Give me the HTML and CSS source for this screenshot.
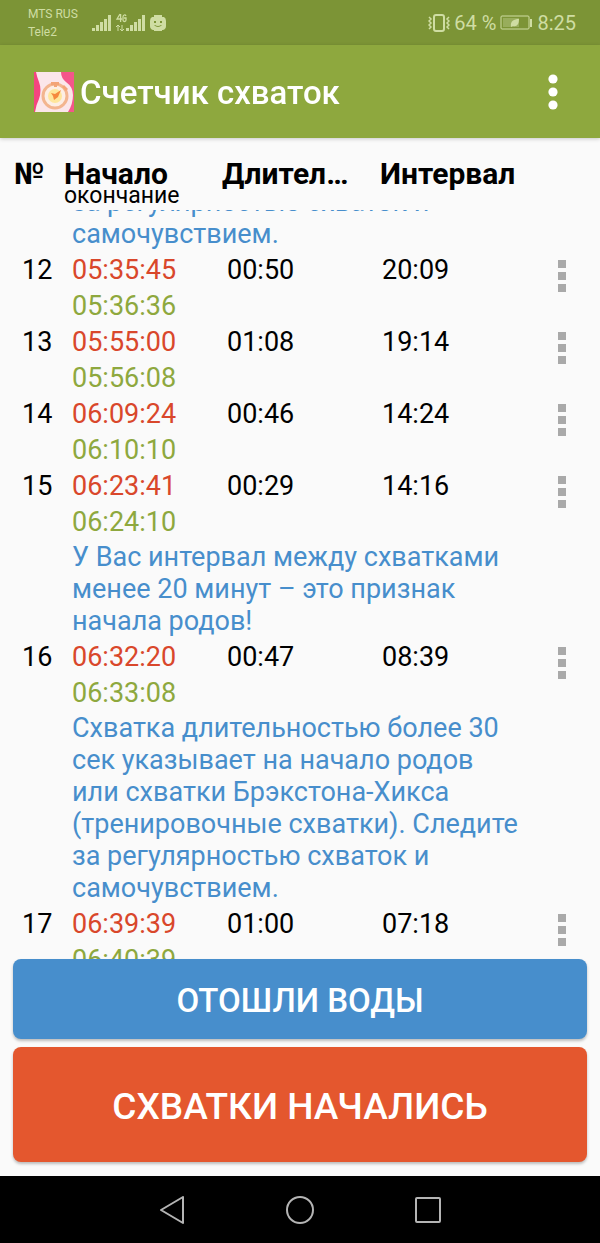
FILE: index.html
```html
<!DOCTYPE html>
<html lang="ru">
<head>
    <meta charset="UTF-8">
    <meta name="viewport" content="width=device-width, initial-scale=1.0">
    <title>Счетчик схваток</title>
    <link rel="stylesheet" href="styles.css">
</head>
<body>
    <div id="app">
        <!-- Строка состояния -->
        <div class="status-bar">
            <div class="operators">MTS RUS<br>Tele2</div>
            <svg class="signal" width="76" height="20" viewBox="0 0 76 20" fill="currentColor">
                <path d="M0 15h3v3H0zM4 12h3v6H4zM8 9h3v9H8zM12 6h3v12h-3zM16 2h3v16h-3z"/>
                <path d="M34 15h3v3h-3zM38 12h3v6h-3zM42 9h3v9h-3zM46 6h3v12h-3zM50 2h3v16h-3z"/>
                <path d="M28 1l-3 5h5M28.600 1v8M34 3c-1-2-3-1-3 1v3c0 2 3 2 3 0V5h-2" fill="none" stroke="currentColor" stroke-width="1.300"/>
                <path d="M26 18v-6M24 14l2-2 2 2M30 12v6M28 16l2 2 2-2" fill="none" stroke="currentColor"/>
                <path fill-rule="evenodd" d="M62 2h8v2h2q2 1 2 4v5q0 3-3 4h-1v1h-8v-1h-1q-3-1-3-4V8q0-3 2-4h2zM62 8v2h2V8zM68 8v2h2V8zM62 12q4 4 8 0l-1 0q-3 2-6 0z"/>
            </svg>
            <div class="status-right">
                <svg width="22" height="18" viewBox="0 0 22 18" fill="none" stroke="currentColor" stroke-width="2">
                    <rect x="6" y="1" width="10" height="16" rx="2"/>
                    <path d="M1 3l2 2-2 2 2 2-2 2 2 2-2 2M21 3l-2 2 2 2-2 2 2 2-2 2 2 2" stroke-width="1.500"/>
                </svg>
                <span>64 %</span>
                <svg width="33" height="16" viewBox="0 0 33 16" fill="none" stroke="currentColor">
                    <rect x="1" y="1" width="28" height="13" rx="1"/>
                    <path d="M3 3h16v9H3z" fill="currentColor" stroke="none" opacity="0.350"/>
                    <path d="M11 12c-1-6 3-8 8-8 0 5-2 8-6 7z" fill="currentColor" stroke="none"/>
                    <path d="M31 4v8" stroke-width="2"/>
                </svg>
                <span>8:25</span>
            </div>
        </div>

        <!-- Шапка приложения -->
        <header class="app-bar">
            <svg class="logo" width="40" height="40" viewBox="0 0 40 40">
                <rect width="40" height="40" fill="#fbe6ea"/>
                <path d="M0 0h2q1 5 3 10 3 8 0 17-3 6-4 13H0z" fill="#f4457f"/>
                <path d="M27 0h13v40h-6q5-8 5-17 0-8-7-13-5-4-5-10z" fill="#f4568a"/>
                <circle cx="21" cy="24" r="12" fill="#fdeee4" stroke="#f3b58f" stroke-width="3"/>
                <circle cx="21" cy="24" r="7" fill="#ffe69b"/>
                <path d="M17 10h8v3h-8zM20 12h3v3h-3zM30 13l4 4-2 2-4-4z" fill="#f3a477"/>
                <path d="M17 21l4 1 6-4-3 7-4 3-1-4z" fill="#f5893e"/>
            </svg>
            <h1>Счетчик схваток</h1>
            <button class="app-menu" aria-label="Меню">
                <svg width="10" height="36" viewBox="0 0 10 36" fill="#fff">
                    <circle cx="5" cy="5" r="4.600"/>
                    <circle cx="5" cy="18" r="4.600"/>
                    <circle cx="5" cy="31" r="4.600"/>
                </svg>
            </button>
        </header>

        <!-- Список схваток -->
        <div class="records" id="records">
            <table>
                <colgroup>
                    <col class="col-number">
                    <col class="col-start">
                    <col class="col-length">
                    <col>
                    <col class="col-menu">
                </colgroup>
                <thead>
                    <tr>
                        <th class="number">№</th>
                        <th>Начало<small>окончание</small></th>
                        <th>Длительность</th>
                        <th class="last">Интервал</th>
                        <th></th>
                    </tr>
                </thead>
                <tbody>
                    <tr class="message">
                        <td></td>
                        <td colspan="3">Схватка длительностью более 30 сек указывает на начало родов или схватки Брэкстона-Хикса (тренировочные схватки). Следите за регулярностью схваток и самочувствием.</td>
                        <td></td>
                    </tr>
                    <tr>
                        <td class="number">12</td>
                        <td class="time"><span class="start">05:35:45</span><span class="end">05:36:36</span></td>
                        <td class="length">00:50</td>
                        <td class="interval">20:09</td>
                        <td><button class="row-menu" aria-label="Действия"><i></i><i></i><i></i></button></td>
                    </tr>
                    <tr>
                        <td class="number">13</td>
                        <td class="time"><span class="start">05:55:00</span><span class="end">05:56:08</span></td>
                        <td class="length">01:08</td>
                        <td class="interval">19:14</td>
                        <td><button class="row-menu" aria-label="Действия"><i></i><i></i><i></i></button></td>
                    </tr>
                    <tr>
                        <td class="number">14</td>
                        <td class="time"><span class="start">06:09:24</span><span class="end">06:10:10</span></td>
                        <td class="length">00:46</td>
                        <td class="interval">14:24</td>
                        <td><button class="row-menu" aria-label="Действия"><i></i><i></i><i></i></button></td>
                    </tr>
                    <tr>
                        <td class="number">15</td>
                        <td class="time"><span class="start">06:23:41</span><span class="end">06:24:10</span></td>
                        <td class="length">00:29</td>
                        <td class="interval">14:16</td>
                        <td><button class="row-menu" aria-label="Действия"><i></i><i></i><i></i></button></td>
                    </tr>
                    <tr class="message">
                        <td></td>
                        <td colspan="3">У Вас интервал между схватками менее 20 минут – это признак начала родов!</td>
                        <td></td>
                    </tr>
                    <tr>
                        <td class="number">16</td>
                        <td class="time"><span class="start">06:32:20</span><span class="end">06:33:08</span></td>
                        <td class="length">00:47</td>
                        <td class="interval">08:39</td>
                        <td><button class="row-menu" aria-label="Действия"><i></i><i></i><i></i></button></td>
                    </tr>
                    <tr class="message">
                        <td></td>
                        <td colspan="3">Схватка длительностью более 30 сек указывает на начало родов или схватки Брэкстона-Хикса (тренировочные схватки). Следите за регулярностью схваток и самочувствием.</td>
                        <td></td>
                    </tr>
                    <tr>
                        <td class="number">17</td>
                        <td class="time"><span class="start">06:39:39</span><span class="end">06:40:39</span></td>
                        <td class="length">01:00</td>
                        <td class="interval">07:18</td>
                        <td><button class="row-menu" aria-label="Действия"><i></i><i></i><i></i></button></td>
                    </tr>
                </tbody>
            </table>
        </div>

        <div class="actions">
            <button class="btn btn-water">ОТОШЛИ ВОДЫ</button>
            <button class="btn btn-start">СХВАТКИ НАЧАЛИСЬ</button>
        </div>

        <!-- Системная навигация -->
        <nav class="nav-bar">
            <button aria-label="Назад">
                <svg width="28" height="28" viewBox="0 0 28 28"><path d="M3 14L25 1v26z"/></svg>
            </button>
            <button aria-label="Домой">
                <svg width="28" height="28" viewBox="0 0 28 28"><circle cx="14" cy="14" r="13"/></svg>
            </button>
            <button aria-label="Недавние">
                <svg width="28" height="28" viewBox="0 0 28 28"><rect x="2" y="2" width="24" height="24" rx="1"/></svg>
            </button>
        </nav>
    </div>

    <script>
        // прокрутка к последним записям
        document.getElementById('records').scrollTop = 153;
    </script>
</body>
</html>
```

FILE: styles.css
```css
* {
    box-sizing: border-box;
}

body {
    margin: 0;
    font-family: Roboto, "Liberation Sans", sans-serif;
    background-color: #fafafa;
    color: #000;
}

#app {
    display: flex;
    flex-direction: column;
    height: 100vh;
}

button {
    margin: 0;
    padding: 0;
    border: none;
    background: none;
    font-family: inherit;
    cursor: pointer;
}

svg {
    display: block;
}

.status-bar {
    display: flex;
    align-items: center;
    flex: none;
    height: 45px;
    padding: 0 24px 0 28px;
    background-color: #7c9436;
    color: #cfdda3;
}

.operators {
    width: 64px;
    font-size: 12px;
    line-height: 18px;
}

.status-right {
    display: flex;
    align-items: center;
    gap: 4px;
    margin-left: auto;
    font-size: 20px;
}

.app-bar {
    display: flex;
    align-items: center;
    flex: none;
    height: 93px;
    padding: 0 32px 0 34px;
    background-color: #8ea83e;
    box-shadow: 0 1px 4px rgba(0, 0, 0, 0.2);
    position: relative;
    z-index: 2;
}

.app-bar h1 {
    margin: 0 0 0 6px;
    padding-top: 2px;
    font-size: 33px;
    font-weight: 500;
    color: #fff;
}

.app-menu {
    margin-left: auto;
    padding: 0 10px;
}

.records {
    flex: 1;
    min-height: 0;
    overflow-y: auto;
    scrollbar-width: none;
}

table {
    width: 100%;
    table-layout: fixed;
    border-collapse: collapse;
    font-size: 27px;
    line-height: 36px;
}

.col-number {
    width: 64px;
}

.col-start,
.col-length {
    width: 158px;
}

.col-menu {
    width: 76px;
}

th,
td {
    padding: 0;
    text-align: left;
    vertical-align: top;
}

th {
    position: sticky;
    top: 0;
    z-index: 1;
    height: 72px;
    padding: 18px 24px 0 0;
    background-color: #fafafa;
    font-size: 30px;
    overflow: hidden;
    text-overflow: ellipsis;
    white-space: nowrap;
}

th.number {
    padding: 18px 0 0 14px;
}

th.last {
    padding-right: 0;
}

th small {
    display: block;
    margin-top: -6px;
    font-size: 23px;
    font-weight: 400;
    line-height: 20px;
}

td.number {
    padding-left: 22px;
}

.time {
    padding-left: 8px;
}

.time span {
    display: block;
}

.start {
    color: #d9472b;
}

.end {
    color: #8ea83e;
}

.length {
    padding-left: 5px;
}

.interval {
    padding-left: 2px;
}

.message td {
    padding: 1px 4px 2px 8px;
    line-height: 32px;
    color: #478ecc;
}

.row-menu {
    display: flex;
    flex-direction: column;
    gap: 4px;
    padding: 8px 34px;
}

.row-menu i {
    width: 8px;
    height: 8px;
    background-color: #a9a9a9;
}

.actions {
    display: flex;
    flex-direction: column;
    flex: none;
    gap: 8px;
    padding: 0 13px 14px;
}

.btn {
    padding-top: 3px;
    border-radius: 8px;
    color: #fff;
    font-weight: 500;
    box-shadow: 0 2px 3px rgba(0, 0, 0, 0.25);
}

.btn-water {
    height: 80px;
    background-color: #478ecc;
    font-size: 33px;
}

.btn-start {
    height: 115px;
    background-color: #e4572e;
    font-size: 37px;
}

.nav-bar {
    display: flex;
    justify-content: center;
    align-items: center;
    flex: none;
    gap: 100px;
    height: 67px;
    background-color: #000;
}

.nav-bar svg {
    fill: none;
    stroke: #b4b4b4;
    stroke-width: 2;
    stroke-linejoin: round;
}
```
